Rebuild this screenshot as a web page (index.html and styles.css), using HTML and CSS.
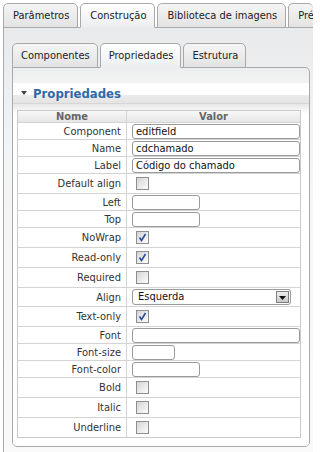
FILE: index.html
```html
<!DOCTYPE html>
<html>
<head>
<meta charset="utf-8">
<link rel="stylesheet" href="styles.css">
</head>
<body>
<div class="outer">
  <div class="tabs outer-tabs">
    <div class="tab">Parâmetros</div>
    <div class="tab active">Construção</div>
    <div class="tab">Biblioteca de imagens</div>
    <div class="tab last">Pré-visualização</div>
  </div>
  <div class="outer-panel">
    <div class="tabs inner-tabs">
      <div class="tab">Componentes</div>
      <div class="tab active">Propriedades</div>
      <div class="tab">Estrutura</div>
    </div>
    <div class="inner-panel">
      <div class="section-head"><span class="arrow"></span>Propriedades</div>
      <div class="content">
        <div class="props">
          <div class="row head"><div class="hcell hname">Nome</div><div class="hcell">Valor</div></div>
          <div class="row r-in"><div class="name">Component</div><div class="val"><span class="input full">editfield</span></div></div>
          <div class="row r-in"><div class="name">Name</div><div class="val"><span class="input full">cdchamado</span></div></div>
          <div class="row r-in"><div class="name">Label</div><div class="val"><span class="input full">Código do chamado</span></div></div>
          <div class="row r-cb"><div class="name">Default align</div><div class="val"><span class="cb"></span></div></div>
          <div class="row r-in"><div class="name">Left</div><div class="val"><span class="input short"></span></div></div>
          <div class="row r-in"><div class="name">Top</div><div class="val"><span class="input short"></span></div></div>
          <div class="row r-cb"><div class="name">NoWrap</div><div class="val"><span class="cb checked"><svg viewBox="0 0 11 11" width="11" height="11"><path d="M2.5 5.5 L4.5 8.5 L8.5 2" fill="none" stroke="#2d4f9e" stroke-width="1.6"/></svg></span></div></div>
          <div class="row r-cb"><div class="name">Read-only</div><div class="val"><span class="cb checked"><svg viewBox="0 0 11 11" width="11" height="11"><path d="M2.5 5.5 L4.5 8.5 L8.5 2" fill="none" stroke="#2d4f9e" stroke-width="1.6"/></svg></span></div></div>
          <div class="row r-cb"><div class="name">Required</div><div class="val"><span class="cb"></span></div></div>
          <div class="row r-sel"><div class="name">Align</div><div class="val"><span class="select">Esquerda<span class="sel-btn"><svg viewBox="0 0 7 4" width="7" height="4"><path d="M0 0 H7 L3.5 4 Z" fill="#111"/></svg></span></span></div></div>
          <div class="row r-cb"><div class="name">Text-only</div><div class="val"><span class="cb checked"><svg viewBox="0 0 11 11" width="11" height="11"><path d="M2.5 5.5 L4.5 8.5 L8.5 2" fill="none" stroke="#2d4f9e" stroke-width="1.6"/></svg></span></div></div>
          <div class="row r-in"><div class="name">Font</div><div class="val"><span class="input full"></span></div></div>
          <div class="row r-in"><div class="name">Font-size</div><div class="val"><span class="input xs"></span></div></div>
          <div class="row r-in"><div class="name">Font-color</div><div class="val"><span class="input short"></span></div></div>
          <div class="row r-cb"><div class="name">Bold</div><div class="val"><span class="cb"></span></div></div>
          <div class="row r-cb"><div class="name">Italic</div><div class="val"><span class="cb"></span></div></div>
          <div class="row r-cb"><div class="name">Underline</div><div class="val"><span class="cb"></span></div></div>
        </div>
      </div>
    </div>
  </div>
</div>
</body>
</html>
```

FILE: styles.css
```css
html, body {
  margin: 0;
  padding: 0;
  background: #fff;
  overflow: hidden;
}
body {
  width: 313px;
  height: 452px;
  font-family: "DejaVu Sans Condensed", "DejaVu Sans", sans-serif;
  font-stretch: condensed;
  font-size: 11px;
  color: #333;
}
.outer {
  width: 313px;
  padding: 3px 0 0 3px;
  box-sizing: border-box;
  overflow: hidden;
}
.tabs {
  display: flex;
  gap: 2px;
  position: relative;
  z-index: 1;
  margin-bottom: -1px;
  white-space: nowrap;
}
.tab {
  box-sizing: border-box;
  height: 25px;
  line-height: 23px;
  padding: 0 8px 0 9px;
  border: 1px solid #a9a9a9;
  border-radius: 5px 5px 0 0;
  background: linear-gradient(#f5f5f5, #e3e3e3);
  color: #222;
  flex: none;
}
.inner-tabs .tab {
  padding: 0 7px 0 8px;
}
.tab.last {
  flex: 0 1 auto;
  min-width: 0;
  overflow: hidden;
  padding-right: 0;
  border-right: none;
}
.tab.active {
  background: linear-gradient(#ffffff, #eceeef);
  border-bottom-color: #eaecee;
}
.outer-panel {
  width: 340px;
  border-top: 1px solid #a9a9a9;
  border-left: 1px solid #a9a9a9;
  padding: 15px 0 0 8px;
  height: 430px;
  background: linear-gradient(#e8eaec, #f3f4f5 120px, #fafafa);
}
.inner-panel {
  box-sizing: border-box;
  width: 298px;
  height: 380px;
  border: 1px solid #a9a9a9;
  border-radius: 0 5px 5px 5px;
  background: linear-gradient(#eceeef, #f2f3f3 15px);
  padding-top: 15px;
  overflow: hidden;
}
.section-head {
  height: 20px;
  line-height: 19px;
  border-bottom: 1px solid #d6d6d6;
  background: linear-gradient(#ffffff 0, #ffffff 58%, #ebebeb 58%, #e4e4e4 100%);
  color: #2f69a7;
  font-weight: bold;
  font-size: 13px;
  padding-left: 8px;
  display: flex;
  align-items: center;
}
.arrow {
  width: 0;
  height: 0;
  border-left: 3px solid transparent;
  border-right: 3px solid transparent;
  border-top: 4px solid #444;
  margin-right: 6px;
}
.content {
  background: linear-gradient(#e6e6e6, #f6f6f6 6px, #ffffff 10px);
  padding: 6px 0 9px 4px;
  height: 400px;
}
.props {
  box-sizing: border-box;
  width: 284px;
  border: 1px solid #c9c9c9;
  background: #fff;
}
.row {
  display: grid;
  grid-template-columns: 109px 1fr;
  box-sizing: border-box;
  border-top: 1px solid #d3d3d3;
}
.row.head {
  border-top: none;
  height: 11px;
  line-height: 11px;
  background: linear-gradient(#f8f8f8, #e6e6e6);
  font-weight: bold;
  color: #666;
}
.hcell {
  text-align: center;
}
.hname { border-right: 1px solid #d3d3d3; }
.r-in { height: 17px; }
.r-cb { height: 20px; }
.r-sel { height: 19px; }
.name {
  padding-right: 5px;
  border-right: 1px solid #d3d3d3;
  display: flex;
  align-items: center;
  justify-content: flex-end;
  color: #333;
}
.val {
  display: flex;
  align-items: center;
  padding-left: 5px;
  color: #111;
}
.input {
  box-sizing: border-box;
  display: block;
  height: 15px;
  line-height: 13px;
  border: 1px solid #9a9a9a;
  border-radius: 3px;
  background: #fff;
  padding-left: 3px;
  white-space: nowrap;
  overflow: hidden;
}
.input.full { width: 168px; }
.input.short { width: 68px; }
.input.xs { width: 43px; }
.cb {
  box-sizing: border-box;
  width: 13px;
  height: 13px;
  margin-left: 4px;
  border: 1px solid #8e8e8e;
  background: linear-gradient(135deg, #d4d4d4, #f7f7f7 85%);
  display: flex;
  align-items: center;
  justify-content: center;
}
.cb svg { display: block; }
.select {
  box-sizing: border-box;
  position: relative;
  display: block;
  width: 159px;
  height: 16px;
  line-height: 14px;
  border: 1px solid #9a9a9a;
  border-radius: 3px;
  background: #fff;
  padding-left: 5px;
}
.sel-btn {
  position: absolute;
  right: 1px;
  top: 1px;
  box-sizing: border-box;
  width: 13px;
  height: 12px;
  border: 1px solid #7e7e7e;
  background: linear-gradient(#efefef, #c9c9c9);
  display: flex;
  align-items: center;
  justify-content: center;
}
.sel-btn svg { display: block; margin-top: 2px; }
```
